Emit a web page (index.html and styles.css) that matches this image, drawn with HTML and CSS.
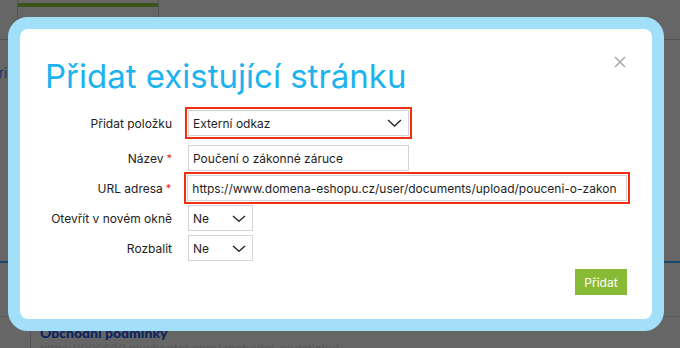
FILE: index.html
```html
<!DOCTYPE html>
<html lang="cs">
<head>
<meta charset="utf-8">
<title>Přidat existující stránku</title>
<link rel="stylesheet" href="styles.css">
</head>
<body>
<div class="page">
  <div class="bg-header">
    <div class="bg-tab"><div class="bg-tab-bar"></div></div>
  </div>
  <div class="bg-side"><div class="bg-crumb"><span>ri</span></div></div>
  <div class="bg-tabline"></div>
  <div class="bg-table">
    <div class="bg-cell">
      <div class="bg-title">Obchodní podmínky</div>
      <div class="bg-url">https://000000.myshoptet.com/obchodni-podminky/</div>
    </div>
  </div>

  <div class="modal">
    <div class="modal-head">
      <h1 class="modal-title">Přidat existující stránku</h1>
      <button class="modal-close" type="button" aria-label="Zavřít">
        <svg width="12" height="12" viewBox="0 0 12 12"><path d="M1 1L11 11M11 1L1 11" stroke="#a8a8a8" stroke-width="1.5" fill="none"/></svg>
      </button>
    </div>
    <div class="form">
      <div class="row row-first">
        <div class="label">Přidat položku</div>
        <div class="field select wide highlight"><span>Externí odkaz</span>
          <svg class="chev" width="15" height="8" viewBox="0 0 15 8"><path d="M1 1L7.5 7L14 1" stroke="#222" stroke-width="1.3" fill="none"/></svg>
        </div>
      </div>
      <div class="row">
        <div class="label">Název<span class="req">*</span></div>
        <div class="field wide"><span>Poučení o zákonné záruce</span></div>
      </div>
      <div class="row">
        <div class="label">URL adresa<span class="req">*</span></div>
        <div class="field xwide highlight"><span>https://www.domena-eshopu.cz/user/documents/upload/pouceni-o-zakon</span></div>
      </div>
      <div class="row">
        <div class="label">Otevřít v novém okně</div>
        <div class="field select small"><span>Ne</span>
          <svg class="chev" width="14" height="7" viewBox="0 0 14 7"><path d="M1 1L7 6.3L13 1" stroke="#222" stroke-width="1.3" fill="none"/></svg>
        </div>
      </div>
      <div class="row">
        <div class="label">Rozbalit</div>
        <div class="field select small"><span>Ne</span>
          <svg class="chev" width="14" height="7" viewBox="0 0 14 7"><path d="M1 1L7 6.3L13 1" stroke="#222" stroke-width="1.3" fill="none"/></svg>
        </div>
      </div>
    </div>
    <div class="modal-foot">
      <button class="btn" type="button">Přidat</button>
    </div>
  </div>
</div>
</body>
</html>
```

FILE: styles.css
```css
* { box-sizing: border-box; }
html, body { margin: 0; padding: 0; }
body {
  width: 680px;
  height: 348px;
  overflow: hidden;
  background: #666666;
  font-family: Inter, "Liberation Sans", sans-serif;
}
.page {
  position: relative;
  width: 680px;
  height: 348px;
  overflow: hidden;
}
.bg-header {
  height: 40px;
  border-bottom: 1px solid #555555;
  padding-left: 17px;
  display: flex;
}
.bg-tab {
  width: 142px;
  height: 39px;
  border-left: 1px solid #545454;
  border-right: 1px solid #545454;
  padding-top: 3px;
}
.bg-tab-bar {
  height: 4px;
  background: #3b5419;
}
.bg-side {
  height: 221px;
  padding-top: 25px;
}
.bg-crumb {
  width: 8px;
  overflow: hidden;
  white-space: nowrap;
  font-size: 13px;
  line-height: 16px;
  color: #1c3470;
}
.bg-crumb span { margin-left: -1px; }
.bg-tabline {
  height: 2px;
  background: #174a68;
}
.bg-table {
  margin-top: 53px;
  border-top: 1px solid #5a5a5a;
  padding-left: 30px;
}
.bg-cell {
  border-left: 1px solid #555555;
  padding: 7px 0 0 9px;
  height: 40px;
}
.bg-title {
  font-family: Lato, Inter, sans-serif;
  font-weight: 900;
  font-size: 14px;
  line-height: 17px;
  color: #0c245e;
}
.bg-url {
  font-size: 12px;
  line-height: 16px;
  color: #595959;
  white-space: nowrap;
}

.modal {
  position: absolute;
  left: 8px;
  top: 17px;
  width: 656px;
  height: 314px;
  background: #ffffff;
  border: 12px solid #a1e0f8;
  border-radius: 20px;
  padding: 31px 25px 24px 24px;
  display: flex;
  flex-direction: column;
}
.modal-head {
  display: flex;
  justify-content: space-between;
  align-items: flex-start;
}
.modal-title {
  margin: 0 0 0 1px;
  font-weight: 400;
  font-size: 33px;
  line-height: 33px;
  color: #1cb3ef;
}
.modal-close {
  margin: -4px 0 0 0;
  padding: 0;
  border: 0;
  background: none;
  width: 13px;
  height: 12px;
  display: flex;
}
.form {
  margin-top: 17px;
  display: flex;
  flex-direction: column;
  gap: 4px;
}
.row {
  display: flex;
  align-items: center;
  height: 26px;
}
.row-first { margin-bottom: 5px; }
.label {
  width: 128px;
  margin-right: 16px;
  text-align: right;
  font-size: 12px;
  color: #222222;
  white-space: nowrap;
}
.req {
  color: #e3262b;
  font-size: 11px;
  margin-left: 3px;
  position: relative;
  top: -1px;
}
.field {
  height: 26px;
  border: 1px solid #d4d4d4;
  padding: 0 6px 0 4px;
  display: flex;
  align-items: center;
  justify-content: space-between;
  font-size: 12px;
  color: #1e1e1e;
  white-space: nowrap;
  overflow: hidden;
  background: #fff;
}
.wide { width: 221px; }
.xwide { width: 442px; }
.small { width: 65px; }
.highlight {
  outline: 2px solid #ee2f12;
  outline-offset: 1px;
  overflow: visible;
}
.chev { flex: none; }
.modal-foot {
  margin-top: 8px;
  display: flex;
  justify-content: flex-end;
}
.btn {
  width: 52px;
  height: 26px;
  border: 0;
  margin: 0;
  padding: 0;
  background: #89ba35;
  color: #ffffff;
  font-family: Inter, "Liberation Sans", sans-serif;
  font-size: 12px;
}
```
